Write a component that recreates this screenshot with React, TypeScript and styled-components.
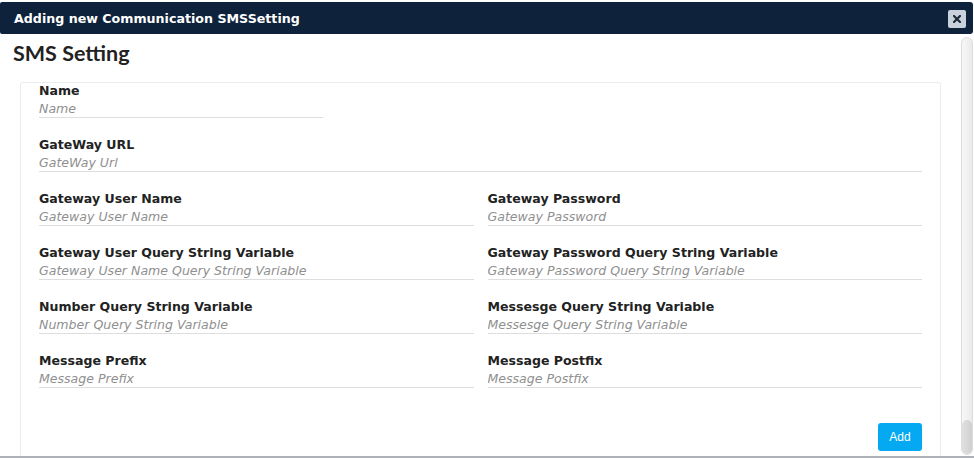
import React from "react";
import styled, { createGlobalStyle } from "styled-components";

const Global = createGlobalStyle`
  html, body { margin: 0; padding: 0; background: #ffffff; }
  body { font-family: "DejaVu Sans", sans-serif; }
  * { box-sizing: border-box; }
`;

const Modal = styled.div`
  width: 974px;
  height: 458px;
  padding: 2px 1px 0 0;
  display: flex;
  flex-direction: column;
  border-bottom: 2px solid #aeb2b8;
  overflow: hidden;
`;

const TitleBar = styled.div`
  flex: 0 0 32px;
  background: #0e233b;
  border-radius: 2px 3px 3px 2px;
  display: flex;
  align-items: center;
  justify-content: space-between;
  padding: 0 7px 0 14px;
`;

const TitleText = styled.span`
  color: #ffffff;
  font-family: "DejaVu Sans", sans-serif;
  font-weight: bold;
  font-size: 12.65px;
`;

const CloseButton = styled.button`
  width: 18px;
  height: 18px;
  padding: 0;
  border: none;
  border-radius: 2px;
  background: #c9d2dc;
  display: flex;
  align-items: center;
  justify-content: center;
  margin-top: 1px;
`;

const BodyRow = styled.div`
  flex: 1;
  display: flex;
  min-height: 0;
`;

const Content = styled.div`
  flex: 1;
  padding: 7px 0 0 13px;
  overflow: hidden;
`;

const Heading = styled.h2`
  margin: 0 0 17px 0;
  font-family: Lato, sans-serif;
  font-weight: bold;
  font-size: 21.5px;
  line-height: 24px;
  color: #222222;
`;

const Card = styled.div`
  margin-left: 7px;
  width: 921px;
  border: 1px solid #ececec;
  border-bottom: none;
  border-radius: 3px 3px 0 0;
  padding: 0 18px 40px 18px;
`;

const Grid = styled.div`
  display: grid;
  grid-template-columns: 1fr 1fr;
  column-gap: 14px;
  row-gap: 19px;
`;

const Field = styled.div<{ $span?: boolean; $width?: number }>`
  display: flex;
  flex-direction: column;
  grid-column: ${(p) => (p.$span ? "1 / -1" : "auto")};
  width: ${(p) => (p.$width ? `${p.$width}px` : "auto")};
`;

const Label = styled.label`
  font-family: "DejaVu Sans", sans-serif;
  font-weight: bold;
  font-size: 12.55px;
  line-height: 16px;
  color: #222222;
`;

const Input = styled.input`
  height: 19px;
  padding: 0;
  margin: 0;
  border: none;
  border-bottom: 1px solid #dedede;
  outline: none;
  font-family: "DejaVu Sans", sans-serif;
  font-size: 12.55px;
  line-height: 18px;
  color: #333;
  background: transparent;
  &::placeholder {
    color: #8f8f8f;
    font-style: italic;
  }
`;

const Actions = styled.div`
  display: flex;
  justify-content: flex-end;
  margin-top: 35px;
`;

const AddButton = styled.button`
  width: 44px;
  height: 28px;
  border: none;
  border-radius: 3px;
  background: #04a9f2;
  color: #ffffff;
  font-family: "Liberation Sans", sans-serif;
  font-size: 12px;
  padding: 0;
`;

const ScrollTrack = styled.div`
  width: 12px;
  margin: 3px 0 1px 2px;
  border-radius: 6px;
  background: linear-gradient(to right, #f7f7f7, #ebebeb);
  border: 1px solid #dcdcdc;
  display: flex;
  flex-direction: column;
  justify-content: flex-end;
`;

const ScrollThumb = styled.div`
  height: 34px;
  border-radius: 6px;
  background: linear-gradient(to right, #e0e0e0, #d0d0d0);
`;

type FieldDef = { label: string; placeholder: string; span?: boolean; width?: number };

const fields: FieldDef[] = [
  { label: "Name", placeholder: "Name", span: true, width: 284 },
  { label: "GateWay URL", placeholder: "GateWay Url", span: true },
  { label: "Gateway User Name", placeholder: "Gateway User Name" },
  { label: "Gateway Password", placeholder: "Gateway Password" },
  { label: "Gateway User Query String Variable", placeholder: "Gateway User Name Query String Variable" },
  { label: "Gateway Password Query String Variable", placeholder: "Gateway Password Query String Variable" },
  { label: "Number Query String Variable", placeholder: "Number Query String Variable" },
  { label: "Messesge Query String Variable", placeholder: "Messesge Query String Variable" },
  { label: "Message Prefix", placeholder: "Message Prefix" },
  { label: "Message Postfix", placeholder: "Message Postfix" },
];

export default function App() {
  return (
    <>
      <Global />
      <Modal>
        <TitleBar>
          <TitleText>Adding new Communication SMSSetting</TitleText>
          <CloseButton aria-label="close">
            <svg width="8" height="8" viewBox="0 0 8 8">
              <path d="M1 1 L7 7 M7 1 L1 7" stroke="#1c2a3a" strokeWidth="2.2" strokeLinecap="square" />
            </svg>
          </CloseButton>
        </TitleBar>
        <BodyRow>
          <Content>
            <Heading>SMS Setting</Heading>
            <Card>
              <Grid>
                {fields.map((f) => (
                  <Field key={f.label} $span={f.span} $width={f.width}>
                    <Label>{f.label}</Label>
                    <Input placeholder={f.placeholder} />
                  </Field>
                ))}
              </Grid>
              <Actions>
                <AddButton>Add</AddButton>
              </Actions>
            </Card>
          </Content>
          <ScrollTrack>
            <ScrollThumb />
          </ScrollTrack>
        </BodyRow>
      </Modal>
    </>
  );
}
